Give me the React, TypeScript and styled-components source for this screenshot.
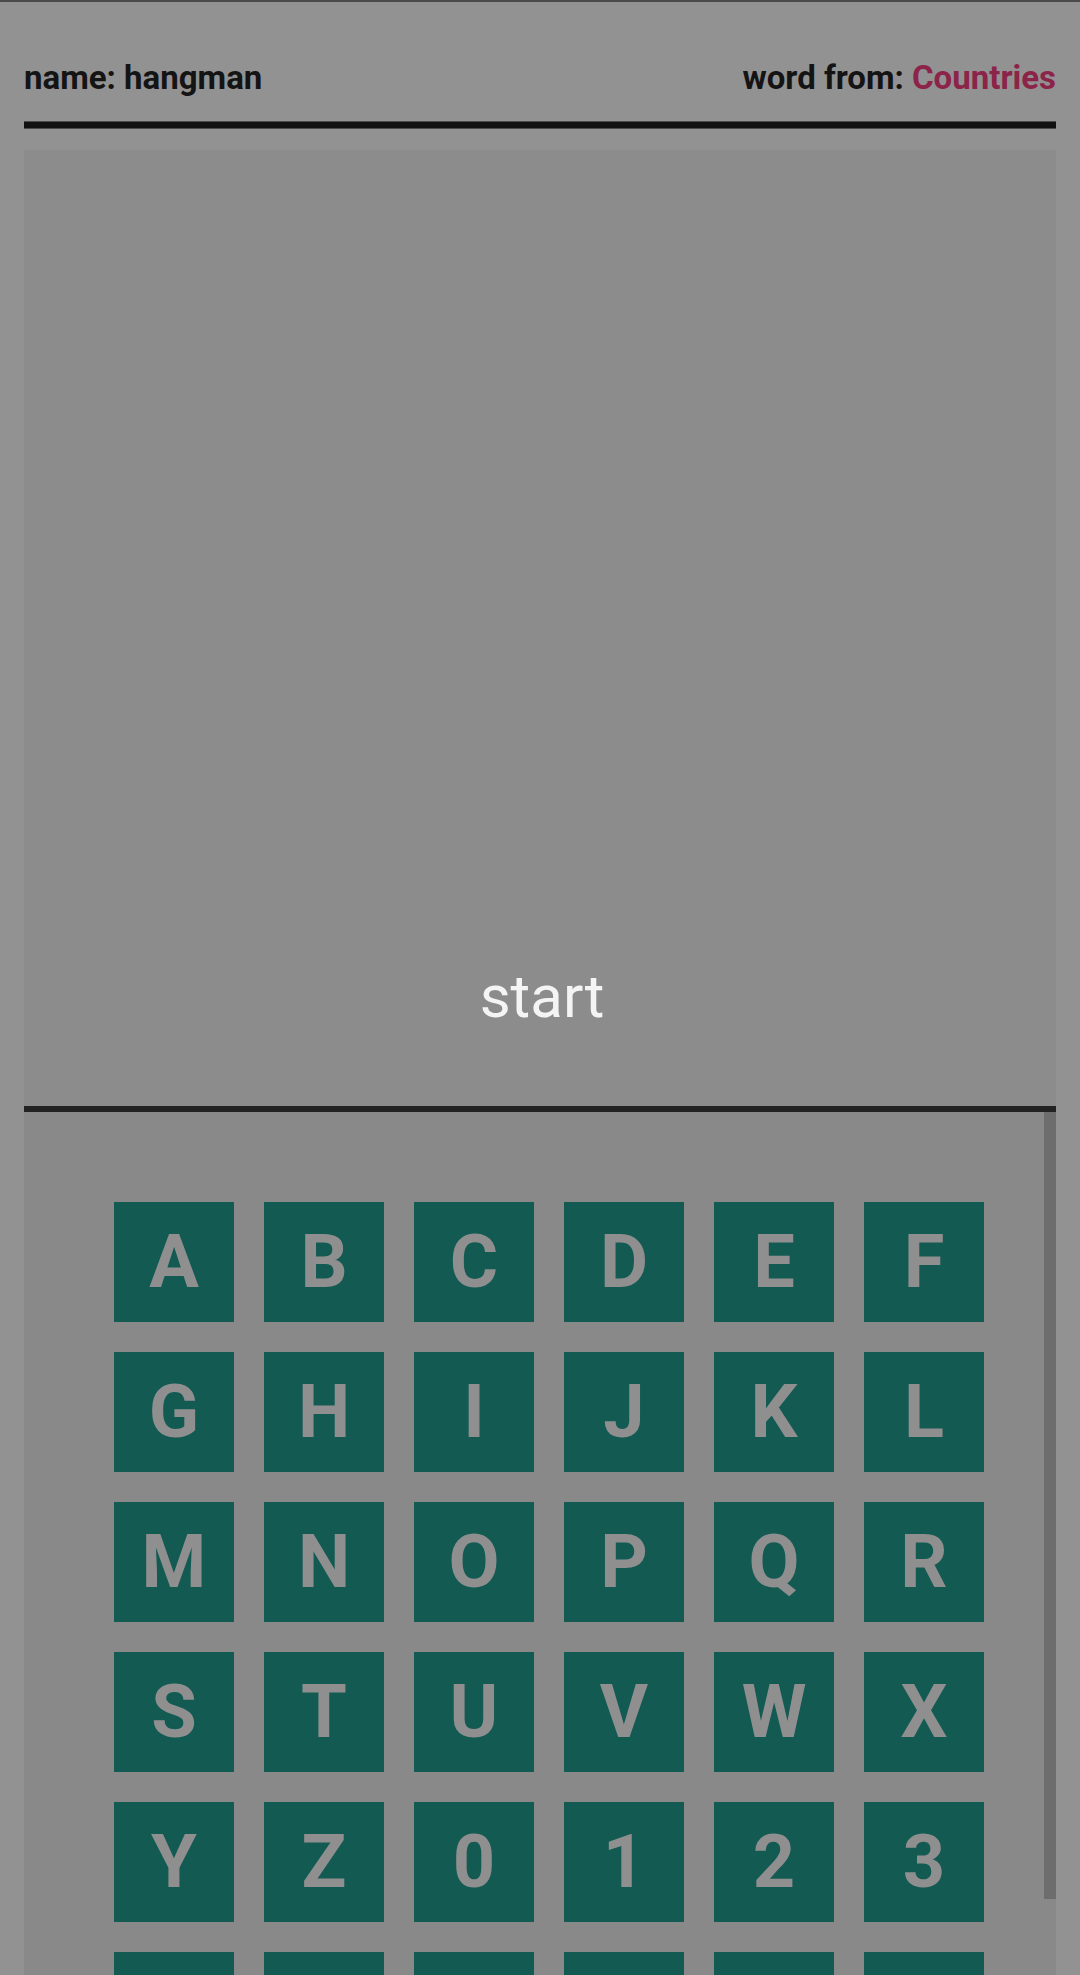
import React from "react";
import styled, { createGlobalStyle } from "styled-components";

const Global = createGlobalStyle`
  html, body {
    margin: 0;
    padding: 0;
    background: #929292;
    font-family: Roboto, "Noto Sans", "Liberation Sans", sans-serif;
  }
  #root { min-height: 1975px; }
`;

const Page = styled.div`
  height: 1975px;
  overflow: hidden;
  display: flex;
  flex-direction: column;
`;

const TopEdge = styled.div`
  height: 2px;
  background: #4b4b4b;
  flex: none;
`;

const Content = styled.div`
  padding: 0 24px;
  display: flex;
  flex-direction: column;
  flex: 1;
  min-height: 0;
`;

const Header = styled.header`
  display: flex;
  justify-content: space-between;
  align-items: baseline;
  padding-top: 56px;
  height: 39px;
  line-height: 39px;
  font-size: 33px;
  font-weight: 700;
  color: #141414;
  margin-bottom: 25px;
  flex: none;
`;

const Accent = styled.span`
  color: #8b2448;
`;

const Rule = styled.div`
  height: 6px;
  background: #111111;
  box-shadow: 0 -1px 0 #4a4a4a, 0 1px 0 #4a4a4a;
  margin-bottom: 22px;
  flex: none;
`;

const Stage = styled.section`
  flex: none;
  background: #8c8c8c;
  border-bottom: 6px solid #222222;
  display: flex;
  flex-direction: column;
  justify-content: flex-end;
  align-items: center;
  padding-bottom: 75px;
  box-sizing: border-box;
  height: 962px;
`;

const StartLabel = styled.div`
  font-size: 60px;
  font-weight: 400;
  color: #f4f4f4;
  line-height: 68px;
  padding-left: 4px;
`;

const KeyPanel = styled.section`
  position: relative;
  flex: 1;
  min-height: 0;
  overflow: hidden;
  background: #898989;
  padding: 90px 0 0 90px;
`;

const Thumb = styled.div`
  position: absolute;
  top: 0;
  right: 0;
  width: 12px;
  height: 787px;
  background: #6d6d6d;
`;

const KeyGrid = styled.div`
  display: grid;
  grid-template-columns: repeat(6, 120px);
  grid-auto-rows: 120px;
  gap: 30px;
`;

const Key = styled.button`
  width: 120px;
  height: 120px;
  border: none;
  padding: 0;
  margin: 0;
  background: #125a52;
  color: #8f8f8f;
  font-family: Roboto, "Noto Sans", "Liberation Sans", sans-serif;
  font-weight: 700;
  font-size: 74px;
  line-height: 120px;
  display: flex;
  align-items: center;
  justify-content: center;
  cursor: pointer;
`;

const keys = "ABCDEFGHIJKLMNOPQRSTUVWXYZ0123456789".split("");

export default function App() {
  return (
    <>
      <Global />
      <Page>
        <TopEdge />
        <Content>
          <Header>
            <span>name: hangman</span>
            <span>
              word from: <Accent>Countries</Accent>
            </span>
          </Header>
          <Rule />
          <Stage>
            <StartLabel>start</StartLabel>
          </Stage>
          <KeyPanel>
            <KeyGrid>
              {keys.map((k) => (
                <Key key={k}>{k}</Key>
              ))}
            </KeyGrid>
            <Thumb />
          </KeyPanel>
        </Content>
      </Page>
    </>
  );
}
